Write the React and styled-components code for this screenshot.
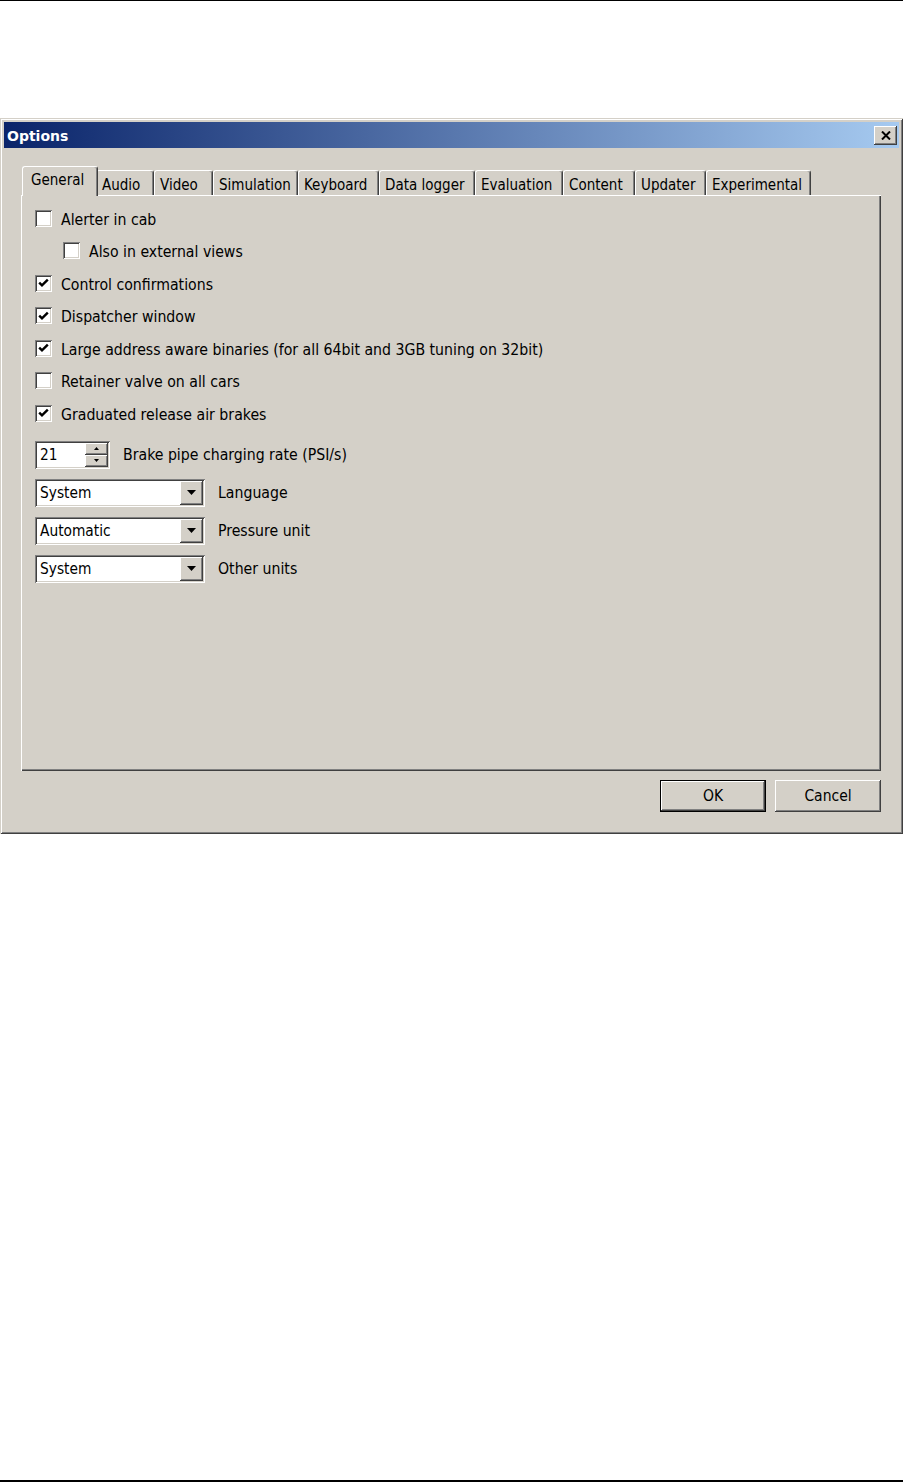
import React from 'react';
import styled, { createGlobalStyle, css } from 'styled-components';

const GlobalStyle = createGlobalStyle`
  html, body {
    margin: 0;
    padding: 0;
    background: #fff;
  }
  body {
    font-family: "DejaVu Sans Condensed", "DejaVu Sans", sans-serif;
    color: #000;
  }
`;

const raised = css`
  background: #d4d0c8;
  box-shadow: inset -1px -1px #404040, inset 1px 1px #fff, inset -2px -2px #808080, inset 2px 2px #d4d0c8;
`;

const sunken = css`
  background: #fff;
  box-shadow: inset 1px 1px #808080, inset -1px -1px #fff, inset 2px 2px #404040, inset -2px -2px #d4d0c8;
`;

const Page = styled.div`
  width: 903px;
  height: 1482px;
  box-sizing: border-box;
  border-top: 1px solid #000;
  border-bottom: 2px solid #000;
  padding-top: 117px;
`;

const Dialog = styled.div`
  width: 903px;
  height: 716px;
  box-sizing: border-box;
  padding: 4px;
  background: #d4d0c8;
  box-shadow: inset 1px 1px #d4d0c8, inset -1px -1px #404040, inset 2px 2px #fff, inset -2px -2px #808080;
  display: flex;
  flex-direction: column;
`;

const TitleBar = styled.div`
  height: 26px;
  display: flex;
  align-items: center;
  justify-content: space-between;
  padding: 0 2px 0 3px;
  background: linear-gradient(to right, #0a246a, #a6caf0);
`;

const Title = styled.span`
  font-family: "DejaVu Sans", sans-serif;
  font-weight: bold;
  font-size: 14px;
  color: #fff;
  padding-top: 1px;
`;

const CloseButton = styled.div`
  width: 23px;
  height: 19px;
  ${raised};
  display: flex;
  align-items: center;
  justify-content: center;
`;

const Body = styled.div`
  flex: 1;
  display: flex;
  flex-direction: column;
  padding: 18px 18px 18px 17px;
`;

const TabRow = styled.div`
  display: flex;
  align-items: flex-end;
  height: 29px;
  padding-left: 3px;
`;

const Tab = styled.div`
  width: ${p => p.$w}px;
  height: 25px;
  box-sizing: border-box;
  border-top: 1px solid #fff;
  border-left: 1px solid #fff;
  border-right: 1px solid #404040;
  border-radius: 3px 3px 0 0;
  box-shadow: inset -1px 0 #808080;
  display: flex;
  align-items: center;
  padding: 3px 0 0 5px;
  font-size: 15px;
  white-space: nowrap;
  ${p => p.$active && css`
    width: ${p.$w + 4}px;
    height: 30px;
    margin: 0 -2px -1px;
    padding: 0 0 3px 8px;
    position: relative;
    z-index: 1;
    background: #d4d0c8;
  `}
`;

const Panel = styled.div`
  height: 576px;
  box-sizing: border-box;
  padding: 7px 12px 0 14px;
  box-shadow: inset 1px 1px #fff, inset -1px -1px #404040, inset -2px -2px #808080;
  display: flex;
  flex-direction: column;
`;

const CheckRow = styled.div`
  display: flex;
  align-items: center;
  gap: 9px;
  height: 32.5px;
  padding-left: ${p => (p.$indent ? 28 : 0)}px;
  font-size: 15.7px;
`;

const Label = styled.span`
  padding-top: 2px;
`;

const Box = styled.div`
  width: 17px;
  height: 17px;
  box-sizing: border-box;
  ${sunken};
  display: flex;
  align-items: center;
  justify-content: center;
`;

const FieldRow = styled.div`
  display: flex;
  align-items: center;
  gap: 13px;
  font-size: 15.7px;
  margin-top: ${p => p.$mt || 0}px;
`;

const Spinner = styled.div`
  width: 75px;
  height: 28px;
  box-sizing: border-box;
  padding: 2px;
  ${sunken};
  display: flex;
  align-items: center;
  justify-content: space-between;
`;

const FieldValue = styled.span`
  padding: 1px 0 0 3px;
  font-size: 15.3px;
`;

const SpinButtons = styled.div`
  display: flex;
  flex-direction: column;
  width: 23px;
  height: 24px;
`;

const SpinButton = styled.div`
  flex: 1;
  ${raised};
  display: flex;
  align-items: center;
  justify-content: center;
`;

const Combo = styled.div`
  width: 170px;
  height: 28px;
  box-sizing: border-box;
  padding: 2px;
  ${sunken};
  display: flex;
  align-items: center;
  justify-content: space-between;
`;

const DropButton = styled.div`
  width: 23px;
  height: 24px;
  ${raised};
  display: flex;
  align-items: center;
  justify-content: center;
`;

const ButtonRow = styled.div`
  display: flex;
  justify-content: flex-end;
  gap: 9px;
  margin-top: 9px;
`;

const Button = styled.div`
  width: 106px;
  height: 32px;
  box-sizing: border-box;
  ${raised};
  display: flex;
  align-items: center;
  justify-content: center;
  font-size: 15.5px;
  ${p => p.$default && css`
    border: 1px solid #000;
  `}
`;

const Arrow = ({ w = 9, h = 5, up }) => (
  <svg width={w} height={h} viewBox={`0 0 ${w} ${h}`}>
    <polygon points={up ? `0,${h} ${w},${h} ${w / 2},0` : `0,0 ${w},0 ${w / 2},${h}`} fill="#000" />
  </svg>
);

const Checkbox = ({ checked }) => (
  <Box>
    {checked && (
      <svg width="11" height="10" viewBox="0 0 11 10">
        <path d="M1.2 4.6 L4 7.4 L9.8 1.6" fill="none" stroke="#000" strokeWidth="2.4" />
      </svg>
    )}
  </Box>
);

const tabs = [
  ['General', 72],
  ['Audio', 58],
  ['Video', 59],
  ['Simulation', 85],
  ['Keyboard', 81],
  ['Data logger', 96],
  ['Evaluation', 88],
  ['Content', 72],
  ['Updater', 71],
  ['Experimental', 105],
];

const checks = [
  { label: 'Alerter in cab', checked: false },
  { label: 'Also in external views', checked: false, indent: true },
  { label: 'Control confirmations', checked: true },
  { label: 'Dispatcher window', checked: true },
  { label: 'Large address aware binaries (for all 64bit and 3GB tuning on 32bit)', checked: true },
  { label: 'Retainer valve on all cars', checked: false },
  { label: 'Graduated release air brakes', checked: true },
];

const combos = [
  ['System', 'Language'],
  ['Automatic', 'Pressure unit'],
  ['System', 'Other units'],
];

export default function App() {
  return (
    <>
      <GlobalStyle />
      <Page>
        <Dialog>
          <TitleBar>
            <Title>Options</Title>
            <CloseButton>
              <svg width="10" height="9" viewBox="0 0 10 9">
                <path d="M1 0.5 L9 8.5 M9 0.5 L1 8.5" stroke="#000" strokeWidth="2" />
              </svg>
            </CloseButton>
          </TitleBar>
          <Body>
            <TabRow>
              {tabs.map(([name, w], i) => (
                <Tab key={name} $w={w} $active={i === 0}>{name}</Tab>
              ))}
            </TabRow>
            <Panel>
              {checks.map(c => (
                <CheckRow key={c.label} $indent={c.indent}>
                  <Checkbox checked={c.checked} />
                  <Label>{c.label}</Label>
                </CheckRow>
              ))}
              <FieldRow $mt={11}>
                <Spinner>
                  <FieldValue>21</FieldValue>
                  <SpinButtons>
                    <SpinButton><Arrow w={5} h={3} up /></SpinButton>
                    <SpinButton><Arrow w={5} h={3} /></SpinButton>
                  </SpinButtons>
                </Spinner>
                <span>Brake pipe charging rate (PSI/s)</span>
              </FieldRow>
              {combos.map(([value, label]) => (
                <FieldRow key={label} $mt={10}>
                  <Combo>
                    <FieldValue>{value}</FieldValue>
                    <DropButton><Arrow /></DropButton>
                  </Combo>
                  <span>{label}</span>
                </FieldRow>
              ))}
            </Panel>
            <ButtonRow>
              <Button $default>OK</Button>
              <Button>Cancel</Button>
            </ButtonRow>
          </Body>
        </Dialog>
      </Page>
    </>
  );
}
